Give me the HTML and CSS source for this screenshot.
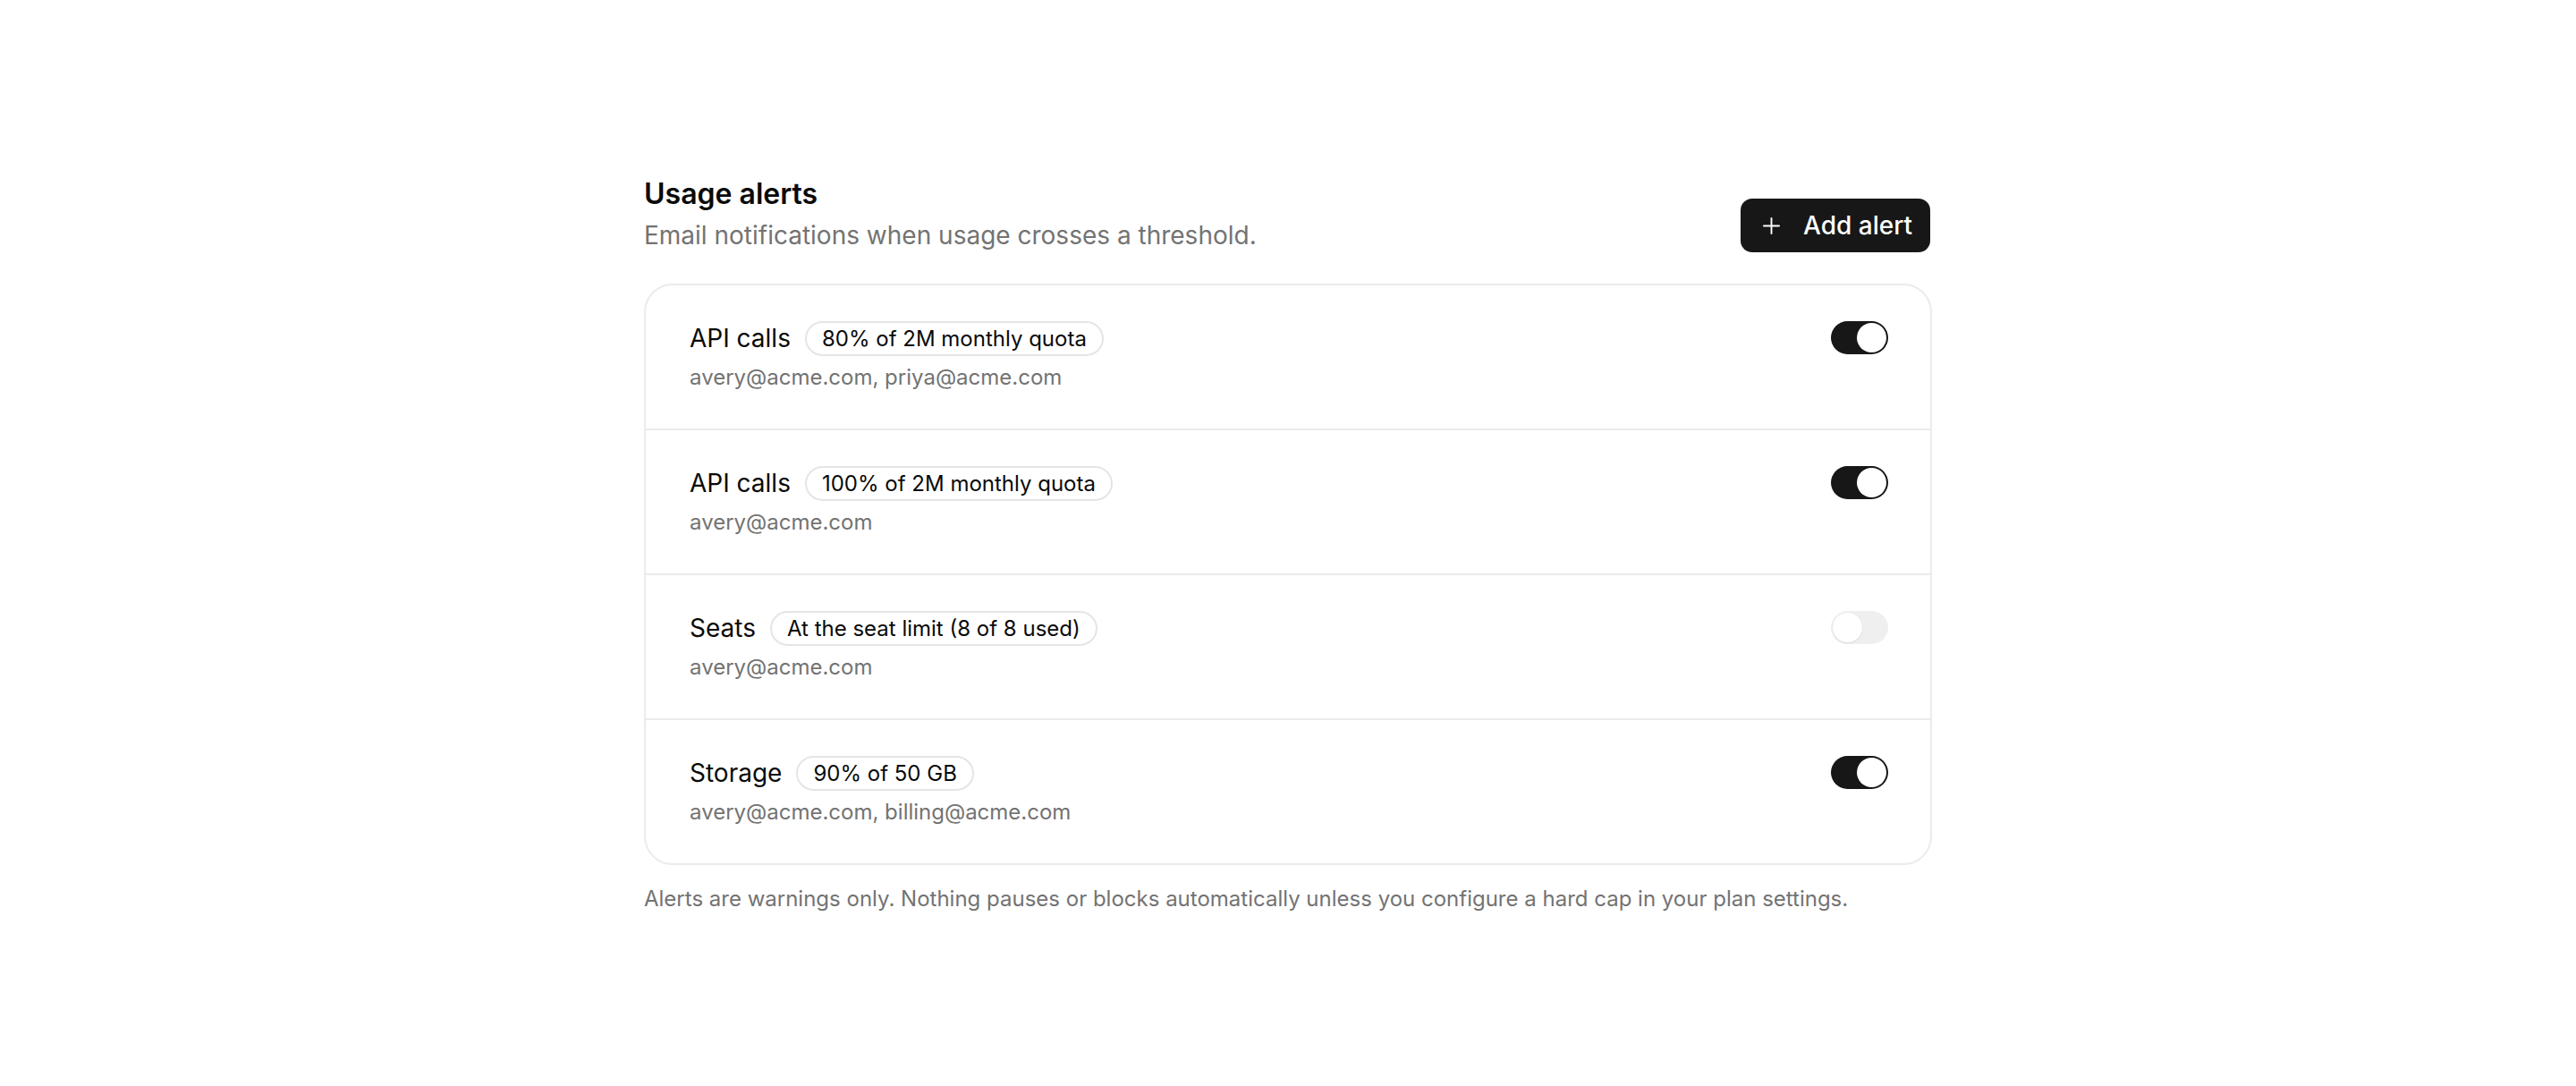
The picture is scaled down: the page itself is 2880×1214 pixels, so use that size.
FILE: index.html
```html
<!DOCTYPE html>
<html lang="en">
<head>
<meta charset="utf-8">
<title>Usage alerts</title>
<link rel="stylesheet" href="styles.css">
</head>
<body>
<main class="page">
  <section class="panel">
    <header class="panel-head">
      <div class="head-text">
        <h1 class="title">Usage alerts</h1>
        <p class="subtitle">Email notifications when usage crosses a threshold.</p>
      </div>
      <button class="add-btn" type="button">
        <svg class="plus" viewBox="0 0 20 20" width="19" height="19" aria-hidden="true"><path d="M10 1v18M1 10h18" stroke="currentColor" stroke-width="2" stroke-linecap="round" fill="none"/></svg>
        <span>Add alert</span>
      </button>
    </header>

    <ul class="alert-list">
      <li class="alert-row">
        <div class="alert-info">
          <div class="alert-line">
            <span class="alert-name">API calls</span>
            <span class="badge">80% of 2M monthly quota</span>
          </div>
          <div class="alert-emails">avery@acme.com, priya@acme.com</div>
        </div>
        <span class="toggle on"><span class="knob"></span></span>
      </li>
      <li class="alert-row">
        <div class="alert-info">
          <div class="alert-line">
            <span class="alert-name">API calls</span>
            <span class="badge">100% of 2M monthly quota</span>
          </div>
          <div class="alert-emails">avery@acme.com</div>
        </div>
        <span class="toggle on"><span class="knob"></span></span>
      </li>
      <li class="alert-row">
        <div class="alert-info">
          <div class="alert-line">
            <span class="alert-name">Seats</span>
            <span class="badge">At the seat limit (8 of 8 used)</span>
          </div>
          <div class="alert-emails">avery@acme.com</div>
        </div>
        <span class="toggle off"><span class="knob"></span></span>
      </li>
      <li class="alert-row">
        <div class="alert-info">
          <div class="alert-line">
            <span class="alert-name">Storage</span>
            <span class="badge">90% of 50 GB</span>
          </div>
          <div class="alert-emails">avery@acme.com, billing@acme.com</div>
        </div>
        <span class="toggle on"><span class="knob"></span></span>
      </li>
    </ul>

    <p class="note">Alerts are warnings only. Nothing pauses or blocks automatically unless you configure a hard cap in your plan settings.</p>
  </section>
</main>
</body>
</html>
```

FILE: styles.css
```css
* { box-sizing: border-box; }

html, body {
  margin: 0;
  padding: 0;
  background: #ffffff;
}

body {
  font-family: Inter, "Noto Sans", "Liberation Sans", sans-serif;
  color: #0a0a0a;
}

.page {
  display: flex;
  justify-content: center;
  padding-top: 197px;
}

.panel {
  width: 1440px;
}

.panel-head {
  display: flex;
  justify-content: space-between;
  align-items: flex-end;
  margin-bottom: 34px;
}

.head-text {
  display: flex;
  flex-direction: column;
  gap: 8px;
}

.title {
  margin: 0;
  font-size: 32px;
  line-height: 39px;
  font-weight: 600;
  color: #0a0a0a;
}

.subtitle {
  margin: 0;
  font-size: 28px;
  line-height: 39px;
  color: #737373;
}

.add-btn {
  display: flex;
  align-items: center;
  gap: 26px;
  height: 60px;
  padding: 0 20px 0 25px;
  margin-right: 2px;
  margin-bottom: 1px;
  background: #171717;
  color: #ffffff;
  border: none;
  border-radius: 13px;
  font-family: inherit;
  font-size: 28px;
  font-weight: 500;
}

.plus {
  width: 19px;
  height: 19px;
}

.alert-list {
  list-style: none;
  margin: 0;
  padding: 0;
  border: 2px solid #ebebeb;
  border-radius: 32px;
}

.alert-row {
  display: flex;
  justify-content: space-between;
  align-items: flex-start;
  padding: 40px 47px 39px 49px;
}

.alert-row + .alert-row {
  border-top: 2px solid #ebebeb;
}

.alert-info {
  display: flex;
  flex-direction: column;
  gap: 6px;
}

.alert-line {
  display: flex;
  align-items: center;
  gap: 16px;
  height: 39px;
}

.alert-name {
  font-size: 28px;
  line-height: 39px;
  color: #0a0a0a;
}

.badge {
  display: inline-flex;
  align-items: center;
  height: 39px;
  padding: 0 17px;
  border: 2px solid #e5e5e5;
  border-radius: 999px;
  font-size: 24px;
  color: #0a0a0a;
}

.alert-emails {
  font-size: 24px;
  line-height: 36px;
  color: #737373;
}

.toggle {
  position: relative;
  display: block;
  width: 64px;
  height: 37px;
  border-radius: 999px;
  flex-shrink: 0;
}

.toggle.on {
  background: #171717;
}

.toggle.off {
  background: #e5e5e5;
  opacity: 0.6;
}

.knob {
  position: absolute;
  top: 2px;
  width: 33px;
  height: 33px;
  border-radius: 50%;
  background: #ffffff;
}

.toggle.on .knob {
  right: 2px;
}

.toggle.off .knob {
  left: 2px;
  box-shadow: 0 1px 2px rgba(0, 0, 0, 0.15);
}

.note {
  margin: 20px 0 0;
  font-size: 24px;
  line-height: 36px;
  color: #737373;
}
```
